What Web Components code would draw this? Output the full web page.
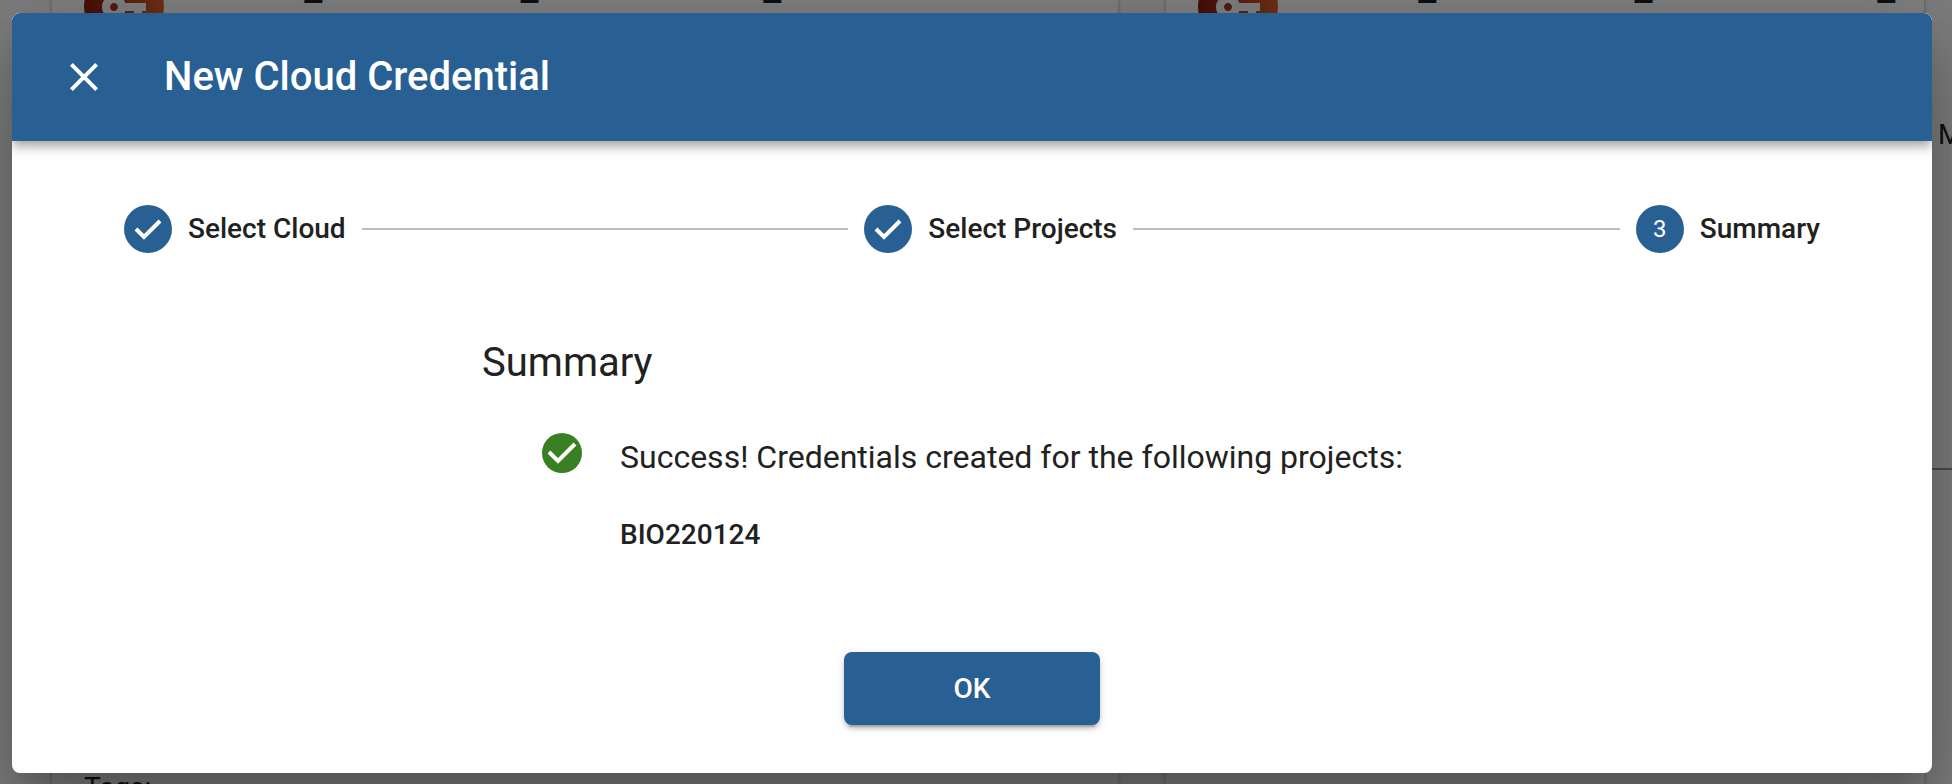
<!DOCTYPE html>
<html lang="en">
<head>
<meta charset="utf-8">
<title>New Cloud Credential</title>
<style>
  html, body { height: 100%; margin: 0; }
  body { font-family: Roboto, sans-serif; color: #212121; background: #fafafa; overflow: hidden; }
</style>
</head>
<body>
<credentials-page>
  <credential-card slot="cards" name="cacao_BIO220085_2023080112_"><span>Tags:</span></credential-card>
  <credential-card slot="cards" name="cacao_BIO220085_2023080120_"></credential-card>
  <span slot="edge">My</span>
  <modal-dialog heading="New Cloud Credential">
    <step-list>
      <step-item done>Select Cloud</step-item>
      <step-item done>Select Projects</step-item>
      <step-item number="3">Summary</step-item>
    </step-list>
    <result-summary heading="Summary">
      Success! Credentials created for the following projects:
      <span slot="projects">BIO220124</span>
    </result-summary>
    <action-button slot="actions">OK</action-button>
  </modal-dialog>
</credentials-page>
<script>
class BaseElement extends HTMLElement {
  constructor() {
    super();
    this.attachShadow({ mode: "open" }).innerHTML = this.render();
  }
}

class CredentialCard extends BaseElement {
  render() {
    return `<style>
      :host { display: flex; flex-direction: column; justify-content: space-between; box-sizing: border-box; min-width: 0;
        background: #fff; border-radius: 8px; box-shadow: 0 2px 4px rgba(0,0,0,.3); padding: 0 32px 20px; }
      header { display: flex; gap: 32px; height: 80px; }
      svg { display: block; width: 80px; height: 80px; flex: none; }
      .name { font-size: 40px; line-height: 40px; white-space: nowrap; }
      .tags { font-size: 28px; line-height: 32px; }
    </style>
    <header>
      <svg viewBox="0 0 80 80" aria-hidden="true"><defs><linearGradient id="g"><stop offset="0" stop-color="#8c1c10"/><stop offset="1" stop-color="#dd632a"/></linearGradient></defs>
        <circle cx="40" cy="40" r="40" fill="url(#g)"/>
        <path transform="translate(16 16) scale(2)" fill="#fff" d="M12.65 10C11.83 7.67 9.61 6 7 6c-3.31 0-6 2.69-6 6s2.69 6 6 6c2.61 0 4.83-1.67 5.65-4H17v4h4v-4h2v-4H12.65zM7 14c-1.1 0-2-.9-2-2s.9-2 2-2 2 .9 2 2-.9 2-2 2z"/></svg>
      <div class="name"></div>
    </header>
    <div class="tags"><slot></slot></div>`;
  }
  connectedCallback() {
    this.shadowRoot.querySelector(".name").textContent = this.getAttribute("name");
  }
}

class CredentialsPage extends BaseElement {
  render() {
    return `<style>
      :host { display: grid; grid-template: 100vh / 100%; overflow: hidden; }
      /* The list is scrolled a little under the dialog. */
      .page { grid-area: 1 / 1; display: grid; grid-template-columns: 1fr 20px;
        margin: -33px 0 -40px; padding-left: 52px; }
      .cards { display: grid; grid-template-columns: 1066px 1fr; column-gap: 48px; padding-right: 8px; }
      .edge { font-size: 28px; line-height: 32px; padding: 152px 0 0 6px; overflow: hidden; white-space: nowrap; }
      hr { margin: 317px 0 0 -6px; border: 0; border-top: 2px solid #949494; }
      .overlay { grid-area: 1 / 1; z-index: 1; display: flex; box-sizing: border-box;
        padding: 13px 20px 11px 12px; background: rgba(0,0,0,.5); }
    </style>
    <div class="page"><div class="cards"><slot name="cards"></slot></div><div class="edge"><slot name="edge"></slot><hr></div></div>
    <div class="overlay"><slot></slot></div>`;
  }
}

class ModalDialog extends BaseElement {
  render() {
    return `<style>
      :host { display: flex; flex-direction: column; flex: 1; background: #fff; border-radius: 8px;
        box-shadow: 0 22px 30px -14px rgba(0,0,0,.2), 0 48px 76px 6px rgba(0,0,0,.14), 0 18px 92px 16px rgba(0,0,0,.12); }
      header { display: flex; align-items: center; gap: 56px; height: 128px; padding: 0 48px; flex: none;
        background: #296094; color: #fff; border-radius: 8px 8px 0 0; clip-path: inset(0 0 -32px 0 round 8px 8px 0 0);
        box-shadow: 0 4px 8px -2px rgba(0,0,0,.2), 0 8px 10px rgba(0,0,0,.14), 0 2px 20px rgba(0,0,0,.12); }
      button { display: block; width: 48px; height: 48px; padding: 0; border: 0; background: none; color: inherit; }
      svg { display: block; width: 48px; height: 48px; fill: currentColor; }
      h2 { margin: 0; font-size: 40px; line-height: 64px; font-weight: 500; }
      main { flex: 1; padding: 64px 112px 0; }
      footer { display: flex; justify-content: center; padding-bottom: 48px; }
    </style>
    <header>
      <button type="button" aria-label="Close"><svg viewBox="0 0 24 24"><path d="M19 6.41 17.59 5 12 10.59 6.41 5 5 6.41 10.59 12 5 17.59 6.41 19 12 13.41 17.59 19 19 17.59 13.41 12z"/></svg></button>
      <h2></h2>
    </header>
    <main><slot></slot></main>
    <footer><slot name="actions"></slot></footer>`;
  }
  connectedCallback() {
    this.setAttribute("role", "dialog");
    this.shadowRoot.querySelector("h2").textContent = this.getAttribute("heading");
  }
}

class StepList extends BaseElement {
  render() {
    return `<style>:host { display: flex; align-items: center; gap: 16px; }</style><slot></slot>`;
  }
}

class StepItem extends BaseElement {
  render() {
    return `<style>
      :host { display: flex; align-items: center; gap: 16px; flex: 1 1 auto; font-size: 28px; line-height: 40px; font-weight: 500; white-space: nowrap; }
      :host(:last-child) { flex: none; }
      .line { flex: 1; height: 2px; background: #bdbdbd; }
      :host(:last-child) .line { display: none; }
      .icon { display: flex; align-items: center; justify-content: center; width: 48px; height: 48px; border-radius: 50%;
        background: #296094; color: #fff; font-size: 24px; font-weight: 400; flex: none; }
      svg { display: block; width: 48px; height: 48px; }
    </style>
    <span class="icon"></span><span><slot></slot></span><span class="line"></span>`;
  }
  connectedCallback() {
    const icon = this.shadowRoot.querySelector(".icon");
    if (this.hasAttribute("done")) {
      icon.innerHTML = `<svg viewBox="0 0 48 48"><path fill="none" stroke="#fff" stroke-width="4" d="M12 24l8 8 16-16"/></svg>`;
    } else {
      icon.textContent = this.getAttribute("number");
    }
  }
}

class ResultSummary extends BaseElement {
  render() {
    return `<style>
      :host { display: block; width: 980px; max-width: 100%; margin: 0 auto; padding-top: 84px; }
      h3 { margin: 0; font-size: 40px; line-height: 52px; font-weight: 400; }
      .result { display: grid; grid-template-columns: 40px 1fr; column-gap: 38px; padding: 44px 0 0 60px; }
      svg { display: block; width: 40px; height: 40px; }
      p { margin: 4px 0 0; font-size: 32px; line-height: 40px; }
      .projects { grid-column: 2; margin-top: 38px; font-size: 28px; line-height: 40px; font-weight: 500; }
    </style>
    <h3></h3>
    <div class="result">
      <svg viewBox="0 0 40 40" aria-hidden="true"><circle cx="20" cy="20" r="20" fill="#388021"/><path fill="none" stroke="#fff" stroke-width="4" d="M7 19l9 9L33 11"/></svg>
      <p><slot></slot></p>
      <div class="projects"><slot name="projects"></slot></div>
    </div>`;
  }
  connectedCallback() {
    this.shadowRoot.querySelector("h3").textContent = this.getAttribute("heading");
  }
}

class ActionButton extends BaseElement {
  render() {
    return `<style>
      :host { display: block; }
      button { display: block; width: 256px; height: 73px; padding: 0; border: 0; border-radius: 8px; background: #296094; color: #fff;
        font: 500 28px/48px Roboto, sans-serif;
        box-shadow: 0 6px 2px -4px rgba(0,0,0,.2), 0 4px 4px rgba(0,0,0,.14), 0 2px 10px rgba(0,0,0,.12); }
    </style><button type="button"><slot></slot></button>`;
  }
}

customElements.define("credential-card", CredentialCard);
customElements.define("credentials-page", CredentialsPage);
customElements.define("modal-dialog", ModalDialog);
customElements.define("step-list", StepList);
customElements.define("step-item", StepItem);
customElements.define("result-summary", ResultSummary);
customElements.define("action-button", ActionButton);
</script>
</body>
</html>
